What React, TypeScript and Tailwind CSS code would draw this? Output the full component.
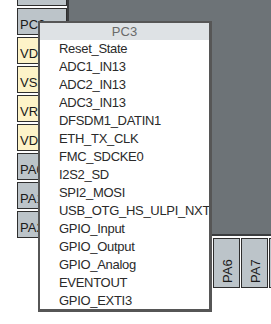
import React from 'react';

const sidePins = [
  { name: 'PC1', power: false },
  { name: 'PC2', power: false },
  { name: 'VDD', power: true },
  { name: 'VSSA', power: true },
  { name: 'VREF+', power: true },
  { name: 'VDDA', power: true },
  { name: 'PA0', power: false },
  { name: 'PA1', power: false },
  { name: 'PA2', power: false },
];

const bottomPins = ['PA6', 'PA7', ''];

const signals = [
  'Reset_State',
  'ADC1_IN13',
  'ADC2_IN13',
  'ADC3_IN13',
  'DFSDM1_DATIN1',
  'ETH_TX_CLK',
  'FMC_SDCKE0',
  'I2S2_SD',
  'SPI2_MOSI',
  'USB_OTG_HS_ULPI_NXT',
  'GPIO_Input',
  'GPIO_Output',
  'GPIO_Analog',
  'EVENTOUT',
  'GPIO_EXTI3',
];

export default function App() {
  return (
    <div className="relative h-[324px] w-[271px] overflow-hidden bg-white font-['Liberation_Sans',Arial,sans-serif] text-[13px]">
      <div className="flex">
        {/* left side pins */}
        <div className="ml-[17px] -mt-[21px] flex flex-col gap-[2px]">
          {sidePins.map(pin => (
            <div
              key={pin.name}
              className={`flex h-[27px] w-[50px] items-center border border-[#2e2e2e] pl-[2px] pt-[6px] leading-none text-[#1a1a1a] ${pin.power ? 'bg-[#fdf3c8]' : 'bg-[#bcc4c9]'}`}
            >
              {pin.name}
            </div>
          ))}
        </div>

        {/* chip body + bottom pins */}
        <div className="flex flex-col">
          <div className="h-[236px] w-[204px] border-b-2 border-l-2 border-[#3b3d3f] bg-[#6d7377]" />
          <div className="mt-[2px] flex gap-[1px] pl-[146px]">
            {bottomPins.map((p, i) => (
              <div key={i} className="relative h-[50px] w-[27px] shrink-0 border border-[#2e2e2e] bg-[#bcc4c9]">
                {p && (
                  <span className="absolute bottom-[4px] left-[7px] origin-bottom-left translate-x-[14px] -rotate-90 whitespace-nowrap text-[13px] leading-[14px] text-[#1a1a1a]">
                    {p}
                  </span>
                )}
              </div>
            ))}
          </div>
        </div>
      </div>

      {/* pin signal popup */}
      <div className="absolute left-[38px] top-[21px] flex h-[291px] w-[174px] flex-col overflow-hidden border-2 border-r-[3px] border-b-[3px] border-[#565656] bg-white">
        <div className="h-[17px] shrink-0 bg-[#dee2e5] text-center leading-[17px] text-[#6a6a6a]">PC3</div>
        <div className="pl-[19px]">
          {signals.map(s => (
            <div key={s} className="h-[18px] overflow-hidden whitespace-nowrap leading-[18px] tracking-[-0.3px] text-[#2a2a2a]">
              {s}
            </div>
          ))}
        </div>
      </div>
    </div>
  );
}
